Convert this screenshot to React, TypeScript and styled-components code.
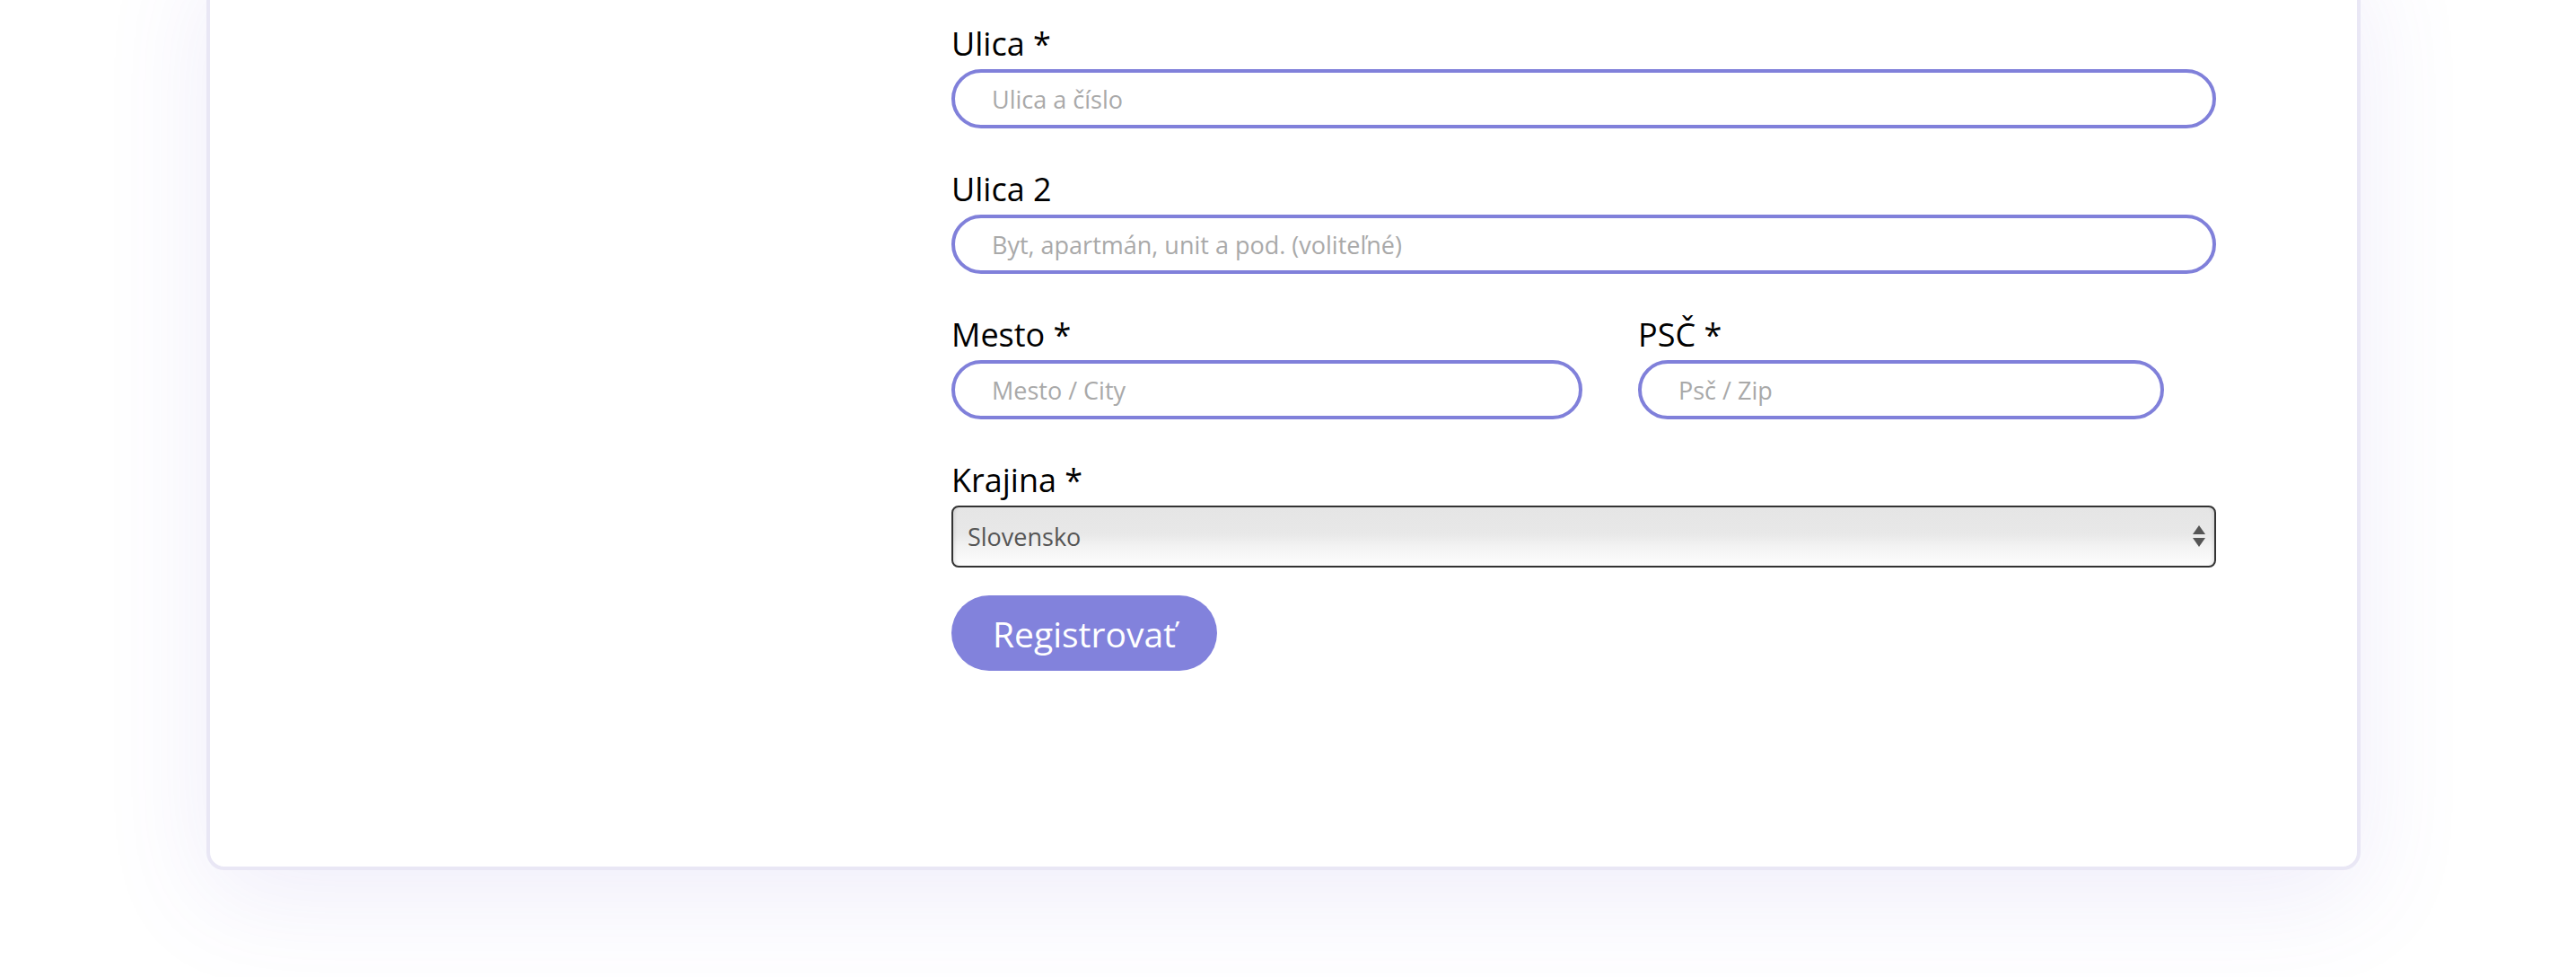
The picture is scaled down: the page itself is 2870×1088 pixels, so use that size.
import React from "react";
import styled, { createGlobalStyle } from "styled-components";

const GlobalStyle = createGlobalStyle`
  html {
    overflow: hidden;
  }
  html, body {
    margin: 0;
    padding: 0;
    background: #ffffff;
  }
  body {
    font-family: "Open Sans", "Noto Sans", Lato, sans-serif;
    color: #000;
  }
  * { box-sizing: border-box; }
`;

const Page = styled.div`
  display: flow-root;
  width: 2870px;
  height: 1088px;
  padding-left: 230px;
`;

const Card = styled.section`
  margin-top: -60px;
  width: 2400px;
  background: #ffffff;
  border: 4px solid #e9e7f5;
  border-radius: 20px;
  box-shadow: 0 30px 120px rgba(100, 80, 210, 0.1);
  padding: 82px 157px 218px 0;
  display: grid;
  grid-template-columns: 1fr 1409px;
`;

const Aside = styled.div``;

const Form = styled.form`
  display: flex;
  flex-direction: column;
`;

const Field = styled.div`
  display: flex;
  flex-direction: column;
  margin-bottom: 45px;
`;

const Row = styled.div`
  display: grid;
  grid-template-columns: 703px 586px;
  column-gap: 62px;
`;

const Label = styled.label`
  display: block;
  font-size: 36px;
  line-height: 46px;
  margin-bottom: 5px;
  color: #000;
  font-weight: 400;
`;

const Input = styled.input`
  width: 100%;
  height: 66px;
  border: 4px solid #8080da;
  border-radius: 40px;
  padding: 0 20px 0 41px;
  font-family: inherit;
  font-size: 27px;
  color: #333;
  background: #fff;
  outline: none;
  &::placeholder {
    color: #a9a9a9;
  }
`;

const SelectWrap = styled.div`
  position: relative;
  width: 100%;
`;

const Select = styled.select`
  appearance: none;
  -webkit-appearance: none;
  width: 100%;
  height: 69px;
  border: 2px solid #333333;
  border-radius: 8px;
  padding: 0 40px 0 16px;
  font-family: inherit;
  font-size: 27px;
  color: #555555;
  background: linear-gradient(
    to bottom,
    #e5e5e5 0%,
    #e8e8e8 45%,
    #f3f3f3 68%,
    #fdfdfd 100%
  );
  box-shadow: inset 4px 0 4px -3px rgba(0, 0, 0, 0.12),
    inset -4px 0 4px -3px rgba(0, 0, 0, 0.12);
  outline: none;
`;

const Arrows = styled.svg`
  position: absolute;
  right: 12px;
  top: 50%;
  transform: translateY(-50%);
  pointer-events: none;
`;

const Button = styled.button`
  margin-top: -14px;
  align-self: flex-start;
  width: 296px;
  height: 84px;
  padding: 0;
  border: none;
  border-radius: 42px;
  background: #8282dc;
  color: #ffffff;
  font-family: inherit;
  font-size: 39px;
  cursor: pointer;
`;

export default function App() {
  return (
    <>
      <GlobalStyle />
      <Page>
        <Card>
          <Aside />
          <Form onSubmit={(e) => e.preventDefault()}>
            <Field>
              <Label htmlFor="street">Ulica *</Label>
              <Input id="street" placeholder="Ulica a číslo" />
            </Field>
            <Field>
              <Label htmlFor="street2">Ulica 2</Label>
              <Input id="street2" placeholder="Byt, apartmán, unit a pod. (voliteľné)" />
            </Field>
            <Row>
              <Field>
                <Label htmlFor="city">Mesto *</Label>
                <Input id="city" placeholder="Mesto / City" />
              </Field>
              <Field>
                <Label htmlFor="zip">PSČ *</Label>
                <Input id="zip" placeholder="Psč / Zip" />
              </Field>
            </Row>
            <Field>
              <Label htmlFor="country">Krajina *</Label>
              <SelectWrap>
                <Select id="country" defaultValue="SK">
                  <option value="SK">Slovensko</option>
                  <option value="CZ">Česko</option>
                </Select>
                <Arrows width="14" height="26" viewBox="0 0 14 26">
                  <polygon points="7,0 14,10 0,10" fill="#555" />
                  <polygon points="0,14 14,14 7,24" fill="#555" />
                </Arrows>
              </SelectWrap>
            </Field>
            <Button type="submit">Registrovať</Button>
          </Form>
        </Card>
      </Page>
    </>
  );
}
